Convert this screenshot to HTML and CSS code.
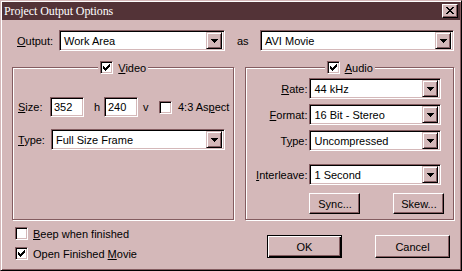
FILE: index.html
```html
<!DOCTYPE html>
<html lang="en">
<head>
<meta charset="UTF-8">
<title>Project Output Options</title>
<link rel="stylesheet" href="styles.css">
</head>
<body>
<div class="window">
    <div class="titlebar">
        <span class="title">Project Output Options</span>
        <span class="close">
            <svg width="8" height="7" viewBox="0 0 8 7" shape-rendering="crispEdges"><path d="M0 0h2v1H0zM6 0h2v1H6zM1 1h2v1H1zM5 1h2v1H5zM2 2h4v1H2zM3 3h2v1H3zM2 4h4v1H2zM1 5h2v1H1zM5 5h2v1H5zM0 6h2v1H0zM6 6h2v1H6z" fill="#000"/></svg>
        </span>
    </div>

    <div class="content">
        <div class="output-row">
            <span class="lbl out-lbl"><u>O</u>utput:</span>
            <div class="combo out-combo">
                <span class="combo-text">Work Area</span>
                <span class="combo-btn"><svg width="7" height="4" viewBox="0 0 7 4" shape-rendering="crispEdges"><path d="M0 0h7v1H0zM1 1h5v1H1zM2 2h3v1H2zM3 3h1v1H3z" fill="#000"/></svg></span>
            </div>
            <span class="as">as</span>
            <div class="combo as-combo">
                <span class="combo-text">AVI Movie</span>
                <span class="combo-btn"><svg width="7" height="4" viewBox="0 0 7 4" shape-rendering="crispEdges"><path d="M0 0h7v1H0zM1 1h5v1H1zM2 2h3v1H2zM3 3h1v1H3z" fill="#000"/></svg></span>
            </div>
        </div>

        <div class="groups">
            <div class="group video">
                <div class="group-title">
                    <span class="check checked"><svg width="7" height="7" viewBox="0 0 7 7" shape-rendering="crispEdges"><path d="M6 0h1v3H6zM5 1h1v3H5zM4 2h1v3H4zM3 3h1v3H3zM2 4h1v3H2zM1 3h1v3H1zM0 2h1v3H0z" fill="#000"/></svg></span>
                    <span><u>V</u>ideo</span>
                </div>
                <div class="size-row">
                    <span class="lbl size-lbl"><u>S</u>ize:</span>
                    <span class="edit">352</span>
                    <span class="unit unit-h">h</span>
                    <span class="edit">240</span>
                    <span class="unit unit-v">v</span>
                    <span class="check"></span>
                    <span class="aspect">4:3 As<u>p</u>ect</span>
                </div>
                <div class="type-row">
                    <span class="lbl type-lbl"><u>T</u>ype:</span>
                    <div class="combo type-combo">
                        <span class="combo-text">Full Size Frame</span>
                        <span class="combo-btn"><svg width="7" height="4" viewBox="0 0 7 4" shape-rendering="crispEdges"><path d="M0 0h7v1H0zM1 1h5v1H1zM2 2h3v1H2zM3 3h1v1H3z" fill="#000"/></svg></span>
                    </div>
                </div>
            </div>

            <div class="group audio">
                <div class="group-title">
                    <span class="check checked"><svg width="7" height="7" viewBox="0 0 7 7" shape-rendering="crispEdges"><path d="M6 0h1v3H6zM5 1h1v3H5zM4 2h1v3H4zM3 3h1v3H3zM2 4h1v3H2zM1 3h1v3H1zM0 2h1v3H0z" fill="#000"/></svg></span>
                    <span><u>A</u>udio</span>
                </div>
                <div class="audio-grid">
                    <span class="lbl"><u>R</u>ate:</span>
                    <div class="combo audio-combo">
                        <span class="combo-text">44 kHz</span>
                        <span class="combo-btn"><svg width="7" height="4" viewBox="0 0 7 4" shape-rendering="crispEdges"><path d="M0 0h7v1H0zM1 1h5v1H1zM2 2h3v1H2zM3 3h1v1H3z" fill="#000"/></svg></span>
                    </div>
                    <span class="lbl"><u>F</u>ormat:</span>
                    <div class="combo audio-combo">
                        <span class="combo-text">16 Bit - Stereo</span>
                        <span class="combo-btn"><svg width="7" height="4" viewBox="0 0 7 4" shape-rendering="crispEdges"><path d="M0 0h7v1H0zM1 1h5v1H1zM2 2h3v1H2zM3 3h1v1H3z" fill="#000"/></svg></span>
                    </div>
                    <span class="lbl">T<u>y</u>pe:</span>
                    <div class="combo audio-combo">
                        <span class="combo-text">Uncompressed</span>
                        <span class="combo-btn"><svg width="7" height="4" viewBox="0 0 7 4" shape-rendering="crispEdges"><path d="M0 0h7v1H0zM1 1h5v1H1zM2 2h3v1H2zM3 3h1v1H3z" fill="#000"/></svg></span>
                    </div>
                    <span class="lbl interleave-lbl"><u>I</u>nterleave:</span>
                    <div class="combo audio-combo interleave">
                        <span class="combo-text">1 Second</span>
                        <span class="combo-btn"><svg width="7" height="4" viewBox="0 0 7 4" shape-rendering="crispEdges"><path d="M0 0h7v1H0zM1 1h5v1H1zM2 2h3v1H2zM3 3h1v1H3z" fill="#000"/></svg></span>
                    </div>
                </div>
                <div class="audio-buttons">
                    <button class="btn small">Sync...</button>
                    <button class="btn small">Skew...</button>
                </div>
            </div>
        </div>

        <div class="footer">
            <div class="options">
                <div class="opt"><span class="check"></span><span><u>B</u>eep when finished</span></div>
                <div class="opt"><span class="check checked"><svg width="7" height="7" viewBox="0 0 7 7" shape-rendering="crispEdges"><path d="M6 0h1v3H6zM5 1h1v3H5zM4 2h1v3H4zM3 3h1v3H3zM2 4h1v3H2zM1 3h1v3H1zM0 2h1v3H0z" fill="#000"/></svg></span><span>Open Finished <u>M</u>ovie</span></div>
            </div>
            <div class="actions">
                <button class="btn default">OK</button>
                <button class="btn">Cancel</button>
            </div>
        </div>
    </div>
</div>
</body>
</html>
```

FILE: styles.css
```css
body, html {
    margin: 0;
    padding: 0;
}
body {
    font-family: "Liberation Sans", Arial, sans-serif;
    font-size: 11px;
    color: #000;
    background-color: #d4b8b9;
}
u {
    text-decoration: underline;
    text-underline-offset: 1px;
}
.window {
    width: 462px;
    height: 271px;
    box-sizing: border-box;
    padding: 1px;
    background-color: #d4b8b9;
    border: 1px solid;
    border-color: #d4b8b9 #000 #000 #d4b8b9;
    box-shadow: inset 1px 1px #fff, inset -1px -1px #845c60;
}
.titlebar {
    height: 18px;
    background-color: #533337;
    display: flex;
    align-items: center;
    justify-content: space-between;
    padding: 0 2px 0 2px;
}
.title {
    font-family: "Liberation Serif", "Times New Roman", serif;
    font-size: 12px;
    letter-spacing: -0.1px;
    color: #fff;
}
.close {
    width: 16px;
    height: 14px;
    box-sizing: border-box;
    background-color: #d4b8b9;
    border: 1px solid;
    border-color: #fff #000 #000 #fff;
    box-shadow: inset -1px -1px #845c60;
    display: flex;
    align-items: center;
    justify-content: center;
    padding-bottom: 1px;
}
.content {
    padding: 10px 6px 0 10px;
}
.lbl {
    white-space: nowrap;
}
.output-row {
    display: flex;
    align-items: center;
    height: 21px;
    padding-left: 5px;
}
.out-lbl {
    width: 42px;
}
.as {
    width: 35px;
    padding-left: 12px;
    box-sizing: border-box;
}

/* sunken combobox */
.combo {
    height: 21px;
    box-sizing: border-box;
    background-color: #fff;
    border: 1px solid;
    border-color: #845c60 #fff #fff #845c60;
    box-shadow: inset 1px 1px #000, inset -1px -1px #d4b8b9;
    display: flex;
    align-items: center;
    padding: 2px;
}
.combo-text {
    flex: 1;
    padding-left: 2px;
    white-space: nowrap;
}
.combo-btn {
    width: 16px;
    height: 17px;
    box-sizing: border-box;
    background-color: #d4b8b9;
    border: 1px solid;
    border-color: #d4b8b9 #000 #000 #d4b8b9;
    box-shadow: inset 1px 1px #fff, inset -1px -1px #845c60;
    display: flex;
    align-items: center;
    justify-content: center;
}
.out-combo {
    width: 166px;
}
.as-combo {
    width: 194px;
}

.groups {
    display: flex;
    gap: 11px;
    margin-top: 16px;
}
.group {
    position: relative;
    height: 153px;
    box-sizing: border-box;
    border: 1px solid #845c60;
    box-shadow: inset 1px 1px #fff, 1px 1px #fff;
}
.video {
    width: 223px;
    padding: 29px 0 0 5px;
}
.audio {
    width: 209px;
    padding: 10px 0 0 0;
}
.group-title {
    position: absolute;
    top: -7px;
    left: 50%;
    transform: translateX(-50%);
    display: flex;
    align-items: center;
    gap: 5px;
    padding: 0 2px;
    height: 13px;
    background-color: #d4b8b9;
    white-space: nowrap;
}

.check {
    width: 13px;
    height: 13px;
    box-sizing: border-box;
    flex: none;
    background-color: #fff;
    border: 1px solid;
    border-color: #845c60 #fff #fff #845c60;
    box-shadow: inset 1px 1px #000, inset -1px -1px #d4b8b9;
    display: flex;
    align-items: center;
    justify-content: center;
}

.size-row {
    display: flex;
    align-items: center;
    height: 20px;
}
.size-lbl {
    width: 32px;
}
.edit {
    width: 34px;
    height: 20px;
    box-sizing: border-box;
    background-color: #fff;
    border: 1px solid;
    border-color: #845c60 #fff #fff #845c60;
    box-shadow: inset 1px 1px #000, inset -1px -1px #d4b8b9;
    padding: 3px 0 0 3px;
}
.unit {
    box-sizing: border-box;
}
.unit-h {
    width: 20px;
    padding-left: 10px;
}
.unit-v {
    width: 21px;
    padding-left: 5px;
}
.aspect {
    margin-left: 6px;
    white-space: nowrap;
}
.type-row {
    display: flex;
    align-items: center;
    margin-top: 12px;
}
.type-lbl {
    width: 33px;
}
.type-combo {
    width: 174px;
}

.audio-grid {
    display: grid;
    grid-template-columns: 63px 132px;
    row-gap: 5px;
    align-items: center;
}
.audio-grid .lbl {
    justify-self: end;
    padding-right: 2px;
}
.interleave-lbl,
.interleave {
    margin-top: 8px;
}
.audio-buttons {
    display: flex;
    gap: 33px;
    padding-left: 63px;
    margin-top: 8px;
}

.btn {
    font-family: "Liberation Sans", Arial, sans-serif;
    font-size: 11px;
    color: #000;
    background-color: #d4b8b9;
    border: 1px solid;
    border-color: #fff #000 #000 #fff;
    box-shadow: inset -1px -1px #845c60;
    padding: 0;
    margin: 0;
    box-sizing: border-box;
}
.btn.small {
    width: 51px;
    height: 21px;
}

.footer {
    display: flex;
    margin-top: 7px;
}
.options {
    display: flex;
    flex-direction: column;
    gap: 7px;
    padding-left: 3px;
}
.opt {
    display: flex;
    align-items: center;
    gap: 5px;
    height: 13px;
}
.actions {
    margin-left: auto;
    margin-top: 8px;
    padding-right: 4px;
    display: flex;
    gap: 33px;
}
.actions .btn {
    width: 75px;
    height: 23px;
}
.btn.default {
    border: 1px solid #000;
    box-shadow: inset 1px 1px #fff, inset -1px -1px #000, inset -2px -2px #845c60;
}
```
